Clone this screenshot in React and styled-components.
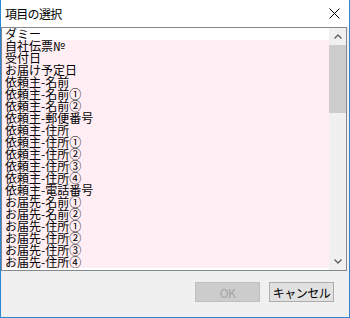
import React from 'react';
import styled, { createGlobalStyle } from 'styled-components';

const GlobalStyle = createGlobalStyle`
  html, body {
    margin: 0;
    padding: 0;
    background: #ffffff;
  }
  body {
    font-family: "Noto Sans CJK JP", "Noto Sans", sans-serif;
  }
`;

const Window = styled.div`
  width: 350px;
  height: 318px;
  box-sizing: border-box;
  border: 1px solid #2b86d4;
  border-top: none;
  background: #f0f0f0;
  display: flex;
  flex-direction: column;
  overflow: hidden;
`;

const TitleBar = styled.div`
  height: 27px;
  flex: none;
  background: #ffffff;
  display: flex;
  align-items: center;
  justify-content: space-between;
  padding-left: 4px;
`;

const Title = styled.span`
  font-size: 12px;
  letter-spacing: -0.7px;
  color: #000;
  line-height: 12px;
`;

const CloseBox = styled.div`
  width: 11px;
  height: 11px;
  margin-right: 9px;
  display: flex;
`;

const ListBox = styled.div`
  height: 244px;
  margin-right: 2px;
  box-sizing: border-box;
  border: 1px solid #828790;
  background: #ffffff;
  display: flex;
  flex: none;
`;

const Items = styled.div`
  flex: 1;
  overflow: hidden;
  display: flex;
  flex-direction: column;
`;

const Row = styled.div`
  height: 12px;
  line-height: 12px;
  font-size: 12px;
  padding-left: 3px;
  white-space: nowrap;
  color: #000;
  background: ${props => props.plain ? '#ffffff' : '#ffeef3'};
`;

const ScrollBar = styled.div`
  width: 17px;
  flex: none;
  background: #f0f0f0;
  display: flex;
  flex-direction: column;
`;

const ArrowBtn = styled.div`
  height: 17px;
  flex: none;
  display: flex;
  align-items: center;
  justify-content: center;
`;

const Track = styled.div`
  flex: 1;
  display: flex;
  flex-direction: column;
`;

const Thumb = styled.div`
  height: ${props => props.h}px;
  background: #cdcdcd;
`;

const Footer = styled.div`
  display: flex;
  justify-content: flex-end;
  gap: 9px;
  padding: 11px 15px 0 0;
`;

const Button = styled.div`
  width: 65px;
  height: 20px;
  box-sizing: border-box;
  border: 1px solid ${props => props.disabled ? '#bfbfbf' : '#adadad'};
  background: ${props => props.disabled ? '#cccccc' : '#e1e1e1'};
  color: ${props => props.disabled ? '#a3a3a3' : '#000'};
  font-size: 12px;
  display: flex;
  align-items: center;
  justify-content: center;
  letter-spacing: -0.5px;
`;

const items = [
  'ダミー',
  '自社伝票№',
  '受付日',
  'お届け予定日',
  '依頼主-名前',
  '依頼主-名前①',
  '依頼主-名前②',
  '依頼主-郵便番号',
  '依頼主-住所',
  '依頼主-住所①',
  '依頼主-住所②',
  '依頼主-住所③',
  '依頼主-住所④',
  '依頼主-電話番号',
  'お届先-名前①',
  'お届先-名前②',
  'お届先-住所①',
  'お届先-住所②',
  'お届先-住所③',
  'お届先-住所④',
];

const Chevron = ({ up }) => (
  <svg width="8" height="5" viewBox="0 0 8 5">
    <polyline
      points={up ? '0.5,4.5 4,1 7.5,4.5' : '0.5,0.5 4,4 7.5,0.5'}
      fill="none"
      stroke="#606060"
      strokeWidth="1.4"
    />
  </svg>
);

export default function App() {
  return (
    <>
      <GlobalStyle />
      <Window>
        <TitleBar>
          <Title>項目の選択</Title>
          <CloseBox>
            <svg width="11" height="11" viewBox="0 0 11 11">
              <path d="M0.5 0.5 L10.5 10.5 M10.5 0.5 L0.5 10.5" stroke="#000" strokeWidth="1" fill="none" />
            </svg>
          </CloseBox>
        </TitleBar>
        <ListBox>
          <Items>
            {items.map((it, i) => (
              <Row key={i} plain={i === 0}>{it}</Row>
            ))}
          </Items>
          <ScrollBar>
            <ArrowBtn><Chevron up /></ArrowBtn>
            <Track>
              <Thumb h={68} />
            </Track>
            <ArrowBtn><Chevron /></ArrowBtn>
          </ScrollBar>
        </ListBox>
        <Footer>
          <Button disabled>OK</Button>
          <Button>キャンセル</Button>
        </Footer>
      </Window>
    </>
  );
}
